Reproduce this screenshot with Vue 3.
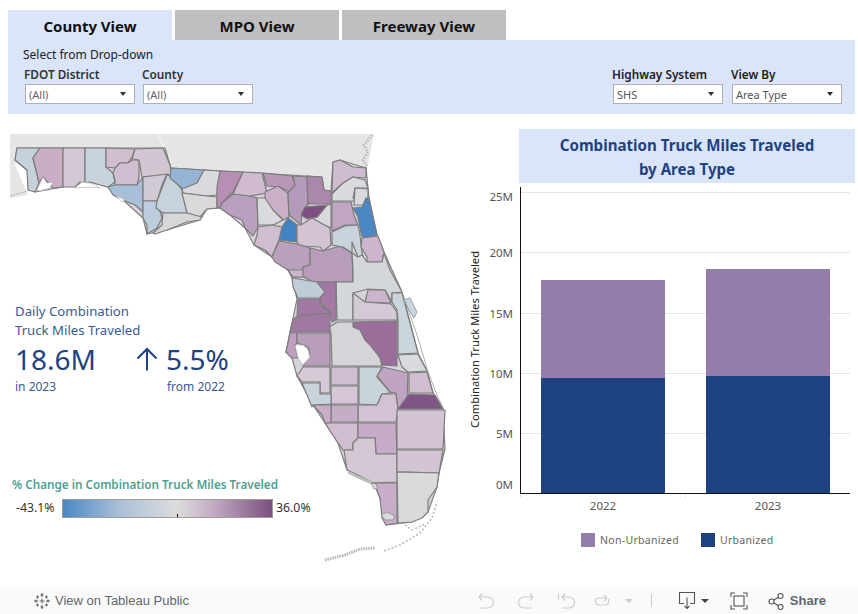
<template>
  <div class="page">
    <nav class="tabs">
      <div v-for="tab in tabs" :key="tab" :class="['tab', { active: tab === 'County View' }]">{{ tab }}</div>
    </nav>

    <section class="filters">
      <div class="filter-left">
        <div class="hint">Select from Drop-down</div>
        <div class="filter-row">
          <div v-for="f in leftFilters" :key="f.label" class="filter">
            <label class="soft">{{ f.label }}</label>
            <div class="select"><span class="muted">{{ f.value }}</span><i class="caret"></i></div>
          </div>
        </div>
      </div>
      <div class="filter-row right">
        <div v-for="f in rightFilters" :key="f.label" class="filter">
          <label>{{ f.label }}</label>
          <div class="select"><span>{{ f.value }}</span><i class="caret"></i></div>
        </div>
      </div>
    </section>

    <main class="content">
      <div class="map-panel">
        <!-- map is drawn in page coordinates -->
        <svg class="map" width="460" height="473" viewBox="0 114 460 473">
          <polygon points="10,134 374,134 367,170 330,195 170,176 165,148 17,148 15,165 28,195 10,198" fill="#e5e5e5" />
          <path d="M158 134 L164 147 L171 163" fill="none" stroke="#f2f2f2" stroke-width="1.5" />
          <path d="M372 135 L364 145 L368 152 L363 160 L367 167" fill="none" stroke="#b9b9b9" stroke-width="2.5" stroke-dasharray="1.5 1.5" />
          <path d="M10 196 L28 191" fill="none" stroke="#b5b5b5" stroke-width="1" stroke-dasharray="2 1" />
          <polygon :points="land" fill="#d6d3d9" stroke="#808080" stroke-width="1.2" stroke-linejoin="round" />
          <polygon v-for="(c, i) in counties" :key="i" :points="c[1]" :fill="c[0]" class="county" />
          <polygon v-for="(w, i) in water" :key="'w' + i" :points="w" class="water" />
          <path d="M348 472 L358 477 L372 483" class="shore" />
          <path d="M403 300 L410 298 L417 312 L414 318 L408 308 Z" fill="#c8d6e0" stroke="#8a8a8a" stroke-width="0.8" />
          <path d="M402 292 L418 338 L428 372 L437 395 L445 412" fill="none" stroke="#999" stroke-width="0.8" />
          <path d="M325 560 L345 555 L360 549 L375 548" class="keys" />
          <path d="M384 551 L400 545 L420 533 L432 518 L437 502" class="keys thin" />
          <path d="M405 525 L412 530 L425 524" class="keys thin" />
          <polygon points="371,483 376,484 378,489 374,489" fill="#d7d9dc" stroke="#888" stroke-width="0.8" />
          <polygon points="381,515 387,512 395,516 393,520 385,520" fill="#d7d9dc" stroke="#888" stroke-width="0.8" />
        </svg>

        <div class="kpi">
          <div class="kpi-title">Daily Combination<br />Truck Miles Traveled</div>
          <div class="kpi-row">
            <div>
              <div class="kpi-value">18.6M</div>
              <div class="kpi-note">in 2023</div>
            </div>
            <div class="kpi-change">
              <div class="kpi-delta">
                <svg class="arrow" width="22" height="24" viewBox="0 0 22 24">
                  <path d="M11 23.5 V2 M1.5 11.5 L11 2 L20.5 11.5" fill="none" stroke="#1f4280" stroke-width="2" />
                </svg>
                <span class="kpi-value">5.5%</span>
              </div>
              <div class="kpi-note from">from 2022</div>
            </div>
          </div>
        </div>

        <div class="scale">
          <div class="scale-title">% Change in Combination Truck Miles Traveled</div>
          <div class="scale-row">
            <span class="scale-min">-43.1%</span>
            <div class="scale-bar"><i class="scale-tick"></i></div>
            <span class="scale-max">36.0%</span>
          </div>
        </div>
      </div>

      <div class="chart-panel">
        <h2 class="chart-title">Combination Truck Miles Traveled<br />by Area Type</h2>
        <svg class="chart" width="395" height="335" viewBox="460 187 395 335">
          <g v-for="t in ticks" :key="t.label">
            <line x1="521" x2="850" :y1="t.y" :y2="t.y" stroke="#e6e6e6" stroke-width="1" />
            <text x="513" :y="t.labelY" class="tick" text-anchor="end">{{ t.label }}</text>
          </g>
          <g v-for="b in bars" :key="b.year">
            <rect :x="b.x" :y="b.top" width="124" :height="b.split - b.top" fill="#957dab" />
            <rect :x="b.x" :y="b.split" width="124" :height="493 - b.split" fill="#1f4280" />
            <text :x="b.x + 62" y="507" class="tick" text-anchor="middle">{{ b.year }}</text>
          </g>
          <line x1="520.5" x2="520.5" y1="494" y2="498" stroke="#e6e6e6" />
          <line x1="685.5" x2="685.5" y1="494" y2="498" stroke="#e6e6e6" />
          <line x1="520.5" x2="520.5" y1="187" y2="494" stroke="#111" />
          <line x1="520" x2="850" y1="493.5" y2="493.5" stroke="#111" />
          <text class="axis-title" transform="translate(479 339.500) rotate(-90)" text-anchor="middle">Combination Truck Miles Traveled</text>
        </svg>
        <div class="legend">
          <div v-for="l in legend" :key="l.name" class="legend-item">
            <i :style="{ background: l.color }"></i>{{ l.name }}
          </div>
        </div>
      </div>
    </main>

    <footer class="footer">
      <svg class="logo" width="18" height="18" viewBox="0 0 18 18" fill="none" stroke="#555" stroke-width="1">
        <path d="M9 1v4M7.500 3h3M9 13v4M7.500 15h3M1 9h4M3 7.500v3M13 9h4M15 7.500v3" />
        <path d="M9 6.500v5M6.500 9h5M4.500 3.500v3M3 5h3M13.500 3.500v3M12 5h3M4.500 11.500v3M3 13h3M13.500 11.500v3M12 13h3" stroke-width="0.9" />
      </svg>
      <span class="public">View on Tableau Public</span>

      <div class="tools">
        <svg class="ic" width="20" height="18" viewBox="0 0 20 18" fill="none" stroke="#ccc" stroke-width="1.200">
          <path d="M3 5h9a5.500 5.500 0 0 1 0 11H4M6 1.500 3 5l3 3.500" />
        </svg>
        <svg class="ic" width="20" height="18" viewBox="0 0 20 18" fill="none" stroke="#ccc" stroke-width="1.200">
          <path d="M17 5H8a5.500 5.500 0 0 0 0 11h8M14 1.500 17 5l-3 3.500" />
        </svg>
        <svg class="ic" width="20" height="18" viewBox="0 0 20 18" fill="none" stroke="#ccc" stroke-width="1.200">
          <path d="M6 5h7a5.500 5.500 0 0 1 0 11H6M9 1.500 6 5l3 3.500M2.500 1.500v7" />
        </svg>
        <svg class="ic" width="20" height="18" viewBox="0 0 20 18" fill="none" stroke="#ccc" stroke-width="1.200">
          <path d="M14 6H7a3.500 3.500 0 0 0 0 7h6a3.500 3.500 0 0 0 3.500-3.500V7M12 3l3 3-3 3" />
        </svg>
        <i class="tool-caret light"></i>
        <i class="divider"></i>
        <svg class="ic down" width="18" height="20" viewBox="0 0 18 20" fill="none" stroke="#555" stroke-width="1.100">
          <path d="M6 12.500H1.500v-11h15v11H12M9 6.500v11M6.500 15 9 17.500 11.500 15" />
        </svg>
        <i class="tool-caret"></i>
        <svg class="ic full" width="18" height="18" viewBox="0 0 18 18" fill="none" stroke="#555" stroke-width="1.100">
          <path d="M1 5V1h4M13 1h4v4M17 13v4h-4M5 17H1v-4" />
          <rect x="4" y="4" width="10" height="10" />
        </svg>
        <svg class="ic share" width="16" height="18" viewBox="0 0 16 18" fill="none" stroke="#555" stroke-width="1.100">
          <circle cx="3.500" cy="9.500" r="2.500" />
          <circle cx="12.500" cy="4" r="2.500" />
          <circle cx="12.500" cy="15" r="2.500" />
          <path d="M5.700 8.200 10.300 5.300M5.700 10.800l4.600 2.900" />
        </svg>
        <span class="share-text">Share</span>
      </div>
    </footer>
  </div>
</template>

<script setup>
const tabs = ['County View', 'MPO View', 'Freeway View']

const leftFilters = [
  { label: 'FDOT District', value: '(All)' },
  { label: 'County', value: '(All)' }
]
const rightFilters = [
  { label: 'Highway System', value: 'SHS' },
  { label: 'View By', value: 'Area Type' }
]

// 0M sits at y=493, each 5M step is about 60px. top and bottom labels are nudged inward
const ticks = [
  { label: '25M', y: 192.5, labelY: 198 },
  { label: '20M', y: 252.5, labelY: 254 },
  { label: '15M', y: 313.5, labelY: 315 },
  { label: '10M', y: 373.5, labelY: 375 },
  { label: '5M', y: 433.5, labelY: 435 },
  { label: '0M', y: 493.5, labelY: 486 }
]

const bars = [
  { year: '2022', x: 541, top: 280, split: 378 },
  { year: '2023', x: 706, top: 269, split: 376 }
]

const legend = [
  { name: 'Non-Urbanized', color: '#957dab' },
  { name: 'Urbanized', color: '#1f4280' }
]

// state outline, sits under the counties so no holes show between them
const land = '17,148 165,148 171,168 322,177 324,190 331,191 333,162 340,160 366,168 369,198 377,235 384,252 402,292 418,353 427,371 433,393 443,409 445,449 439,473 437,487 428,512 412,522 386,525 380,498 374,483 347,470 338,443 325,423 313,405 297,376 292,358 286,352 290,332 297,299 292,278 288,270 272,257 254,245 245,228 230,215 220,208 207,209 200,220 167,230 147,234 143,218 123,200 108,187 90,182 63,187 35,192 27,170 15,160'

// [fill, outline] per county, in page pixels
const counties = [
  ['#c5d1db', '17,148 40,148 33,158 36,170 39,183 35,192 28,190 27,170 15,160'],
  ['#c9aec6', '40,148 63,148 63,187 53,188 43,177 39,183 36,170 33,158'],
  ['#d3c8d4', '63,148 85,148 85,183 80,182 75,187 63,187'],
  ['#c9d3db', '85,148 106,148 106,167 113,173 115,182 108,187 100,185 90,182 85,183'],
  ['#d1bfd0', '106,148 135,149 132,157 128,163 120,163 115,168 106,167'],
  ['#d0bfd0', '115,168 120,163 128,163 132,160 139,160 139,177 137,185 115,185 115,180 113,173'],
  ['#d3c6d3', '135,149 163,148 170,165 172,174 142,177 139,160 132,159'],
  ['#a7bfd8', '108,187 115,185 137,185 143,177 143,212 135,205 123,200 113,195'],
  ['#d1c9d4', '143,177 167,174 162,185 157,201 143,201'],
  ['#bccedd', '143,201 157,201 162,218 157,228 147,234 147,225 143,218'],
  ['#c7d3dc', '157,201 167,175 172,177 182,190 187,213 163,213 156,208'],
  ['#96b5d6', '171,168 204,170 197,183 183,189 170,178'],
  ['#d8dadd', '204,170 220,171 217,195 207,196 183,193 182,189 197,183'],
  ['#d7d9db', '182,193 207,196 217,197 217,208 207,209 200,217 187,213'],
  ['#d7d7d9', '163,213 187,213 202,217 200,220 187,222 167,230 155,234 153,233 162,225'],
  ['#b78fb5', '220,171 243,172 233,192 222,203 221,208 217,207 217,187'],
  ['#b9a0bf', '233,194 250,196 257,198 258,227 253,236 245,228 242,220 230,215 220,208 222,203'],
  ['#d0bbd0', '243,172 262,173 267,193 250,196 233,194'],
  ['#b998b7', '263,173 292,176 295,185 292,193 280,187 267,186'],
  ['#caafc9', '265,192 278,186 288,193 289,217 283,220 273,210 265,200'],
  ['#d8dadd', '257,198 265,198 273,210 283,220 273,225 258,225'],
  ['#b49bbb', '293,176 307,177 308,205 302,212 301,225 295,220 289,215 288,193 295,185'],
  ['#ab88ab', '307,176 322,177 324,190 331,191 331,204 308,204'],
  ['#d8dadd', '327,205 331,204 331,228 320,223 312,218 317,217'],
  ['#7e4f80', '305,207 327,205 317,217 307,219 301,215'],
  ['#3f83c4', '288,218 297,225 297,242 279,240 282,227'],
  ['#d3c3d3', '301,225 312,218 330,228 331,245 323,251 320,247 300,246 297,242 297,225'],
  ['#d0bdd0', '258,227 273,225 282,227 279,240 272,257 265,250 254,245 257,235'],
  ['#b9a0bb', '279,241 297,244 310,248 310,265 303,267 302,277 293,277 288,270 275,262 272,257'],
  ['#b89dbb', '310,248 323,251 340,246 352,253 353,282 313,282 304,277 302,277 303,267 310,265'],
  ['#d0bccf', '332,193 333,162 340,160 353,167 366,168 366,178 353,177 343,183'],
  ['#d8dadd', '332,194 343,183 353,177 365,180 368,188 355,188 353,198 356,201 332,201'],
  ['#d8dadd', '355,188 368,189 368,198 363,205 354,205'],
  ['#4a87c3', '366,198 369,198 373,217 377,235 363,238 361,233 358,217 353,208 362,207'],
  ['#c0a6c2', '332,202 351,202 354,215 358,225 345,225 332,231'],
  ['#c8d3dc', '332,232 345,226 358,225 360,235 362,253 363,256 358,257 352,242 352,253 343,247 332,245'],
  ['#cdb5cd', '362,238 378,236 384,252 382,262 367,262 367,257 361,247'],
  ['#d3d7da', '352,253 358,257 362,255 367,262 382,262 384,253 390,270 402,292 392,293 392,302 385,290 368,289 353,293 353,320 337,320 336,282 353,282 353,270'],
  ['#cbb5cc', '368,290 385,290 391,303 365,302'],
  ['#d4cad5', '353,293 365,302 391,304 397,312 397,320 353,320'],
  ['#cbd5dc', '392,293 402,293 418,353 398,354 398,320 397,310 392,302'],
  ['#9a6d9a', '353,322 397,321 397,366 382,365 380,358 370,345 365,340 360,330 353,327'],
  ['#d5d4d8', '328,328 337,322 353,322 353,327 360,330 365,340 370,345 380,358 382,366 332,366 331,333'],
  ['#cbb5cb', '288,270 303,270 303,277 293,277'],
  ['#c0cdd7', '292,278 317,282 325,292 320,298 298,298 293,287'],
  ['#a478a5', '317,282 336,282 336,320 332,322 330,312 320,303 320,298 325,292'],
  ['#a278a4', '298,299 320,299 320,305 330,312 322,315 297,315'],
  ['#a079a3', '297,316 330,313 330,332 290,332 293,320'],
  ['#c0a0c0', '290,333 297,333 297,343 295,345 298,358 292,358 286,352'],
  ['#b99ebb', '297,333 330,333 330,366 303,366 310,355 308,347 303,345 297,343'],
  ['#d5c9d5', '303,367 330,367 330,393 320,393 320,382 302,382 297,376'],
  ['#d0bdd0', '331,367 358,367 358,385 331,385'],
  ['#d4c6d4', '331,386 358,386 358,404 331,404'],
  ['#c8d3dc', '302,383 320,383 320,394 331,394 331,404 313,405 312,407'],
  ['#c8d3da', '359,367 382,367 377,377 391,393 382,394 377,405 359,404'],
  ['#c0a5c2', '383,367 408,373 407,400 398,409 396,393 390,392 377,376'],
  ['#d8dadd', '398,355 418,354 427,371 408,372 402,367'],
  ['#d0bdd0', '409,373 427,372 433,393 409,393'],
  ['#7f5585', '409,394 435,395 443,409 398,409'],
  ['#d3c2d3', '358,405 377,405 382,394 396,394 398,410 396,422 358,422'],
  ['#c4aec6', '331,405 358,405 358,422 331,422'],
  ['#c9aec9', '313,405 331,405 331,423 325,423 322,415'],
  ['#d0bdd0', '325,423 358,423 358,438 353,443 353,450 343,450 338,443'],
  ['#c5abc5', '358,423 396,423 397,454 376,454 375,438 358,438'],
  ['#d4c8d4', '344,450 353,450 353,443 358,438 375,438 376,454 397,454 397,482 374,483 358,475 347,470'],
  ['#c9aec9', '374,483 397,483 397,523 386,525 382,518 380,498'],
  ['#d3c5d3', '397,410 445,410 443,449 397,449'],
  ['#d3c5d3', '397,450 443,450 439,473 408,472 397,472'],
  ['#d8dadc', '397,472 439,473 437,487 428,500 428,512 422,518 412,522 398,523']
]

// bays cut out of the county shapes
const water = [
  '37,190 43,177 47,183 53,182 50,188 40,191',
  '75,188 82,182 90,183 100,188 88,187',
  '116,195 125,200 122,202',
  '295,345 303,345 308,350 310,357 303,365 298,358'
]
</script>

<style>
html, body { background: #fff; }
</style>

<style scoped>
.page { width: 858px; height: 614px; overflow: hidden; font-family: "Noto Sans", sans-serif; background: #fff; color: #333; }
.tabs { display: flex; gap: 3px; padding: 10px 0 0 8px; height: 30px; }
.tab { width: 164px; background: #bfbfbf; color: #111; font-weight: 700; font-size: 15px; line-height: 33px; text-align: center; }
.tab.active { background: #dae5f9; }

.filters { display: flex; justify-content: space-between; margin: 0 3px 0 8px; height: 74px; background: #dae5f9; padding: 0 13px 0 15px; }
.hint { font-size: 12px; color: #222; line-height: 16px; margin-top: 7px; }
.filter-row { display: flex; gap: 8px; margin-top: 3px; padding-left: 2px; }
.filter-row.right { margin-top: 26px; gap: 9px; }
.filter label { display: block; font-size: 11.800px; font-weight: 600; color: #222; line-height: 15px; margin: 1px 0 2px -1px; white-space: nowrap; }
.filter label.soft { color: #333; }
.select { display: flex; align-items: center; justify-content: space-between; box-sizing: border-box; width: 110px; height: 20px; background: #fff; border: 1px solid #b0b0b0; padding: 0 8px 0 3px; font-size: 11px; color: #555; }
.select span { position: relative; top: 0.500px; }
.select .muted { color: #666; }
.caret { width: 0; height: 0; border-left: 3.500px solid transparent; border-right: 3.500px solid transparent; border-top: 4px solid #333; }

.content { display: flex; height: 473px; }
.map-panel { position: relative; width: 460px; height: 473px; }
.map { position: absolute; left: 0; top: 0; }
.county { stroke: #7c7c7c; stroke-width: 1.2; stroke-linejoin: round; }
.water { fill: #fff; stroke: #aaa; stroke-width: 0.6; }
.shore { fill: none; stroke: #bbb; stroke-width: 3; }
.keys { fill: none; stroke: #b5b5b5; stroke-width: 3; stroke-dasharray: 1.500 1; }
.keys.thin { stroke-width: 1.500; stroke-dasharray: 2 2; }

.kpi { position: relative; padding: 188px 0 0 15px; color: #1f4280; }
.kpi-title { font-size: 13.200px; line-height: 19px; color: #3a5a94; }
.kpi-row { display: flex; margin-top: 3px; }
.kpi-value { font-size: 28px; line-height: 32px; color: #1f4280; }
.kpi-note { font-size: 12px; line-height: 16px; color: #3a5a94; margin-top: 4px; }
.kpi-note.from { margin-left: 31px; margin-top: 4px; }
.kpi-change { margin-left: 40px; }
.kpi-delta { display: flex; align-items: center; gap: 8px; }

.scale { position: absolute; left: 12px; top: 362px; }
.scale-title { font-size: 11.700px; font-weight: 600; color: #4e9f94; line-height: 16px; }
.scale-row { display: flex; align-items: center; gap: 3px; margin-top: 7px; font-size: 12.300px; color: #333; }
.scale-min { margin-left: 4px; width: 43px; padding-bottom: 2px; }
.scale-max { padding-bottom: 2px; }
.scale-bar { position: relative; box-sizing: border-box; width: 211px; height: 19px; border: 1px solid #a29c92; background: linear-gradient(to right, #4b88c4 0%, #a9bfd8 27%, #dcdcdc 54.500%, #c3abc3 72%, #7a4f7e 100%); }
.scale-tick { position: absolute; left: 114px; bottom: 0; width: 1px; height: 3px; background: #111; }

.chart-panel { width: 395px; }
.chart-title { margin: 15px 0 4px 59px; height: 54px; background: #dae5f9; color: #1f4280; font-size: 15.100px; font-weight: 700; line-height: 24px; text-align: center; box-sizing: border-box; padding-top: 4px; }
.chart { display: block; }
.tick { font-size: 11.500px; fill: #555; font-family: "Noto Sans", sans-serif; dominant-baseline: middle; }
.axis-title { font-size: 11.200px; fill: #222; font-family: "Noto Sans", sans-serif; }
.legend { display: flex; gap: 22px; margin: 11px 0 0 121px; font-size: 10.500px; color: #666; letter-spacing: 0.3px; }
.legend-item { display: flex; align-items: center; gap: 5px; line-height: 14px; }
.legend-item i { width: 14px; height: 14px; }

.footer { display: flex; align-items: center; height: 27px; background: #fafafa; padding-left: 33px; font-family: "Liberation Sans", sans-serif; color: #666; }
.logo { margin-right: 4px; }
.public { font-size: 13px; }
.tools { display: flex; align-items: center; margin-left: auto; padding-right: 32px; }
.ic { display: block; }
.tools .ic:nth-child(1) { margin-right: 20px; }
.tools .ic:nth-child(2) { margin-right: 20px; }
.tools .ic:nth-child(3) { margin-right: 16px; }
.tool-caret { width: 0; height: 0; border-left: 4px solid transparent; border-right: 4px solid transparent; border-top: 4px solid #444; margin-left: 4px; }
.tool-caret.light { border-top-color: #ccc; margin-left: 13px; }
.divider { width: 1px; height: 13px; background: #ccc; margin: 0 26px 0 18px; }
.down { margin-right: 1px; }
.full { margin-left: 21px; }
.share { margin-left: 20px; }
.share-text { font-size: 13px; font-weight: 700; margin-left: 6px; color: #666; }
</style>
